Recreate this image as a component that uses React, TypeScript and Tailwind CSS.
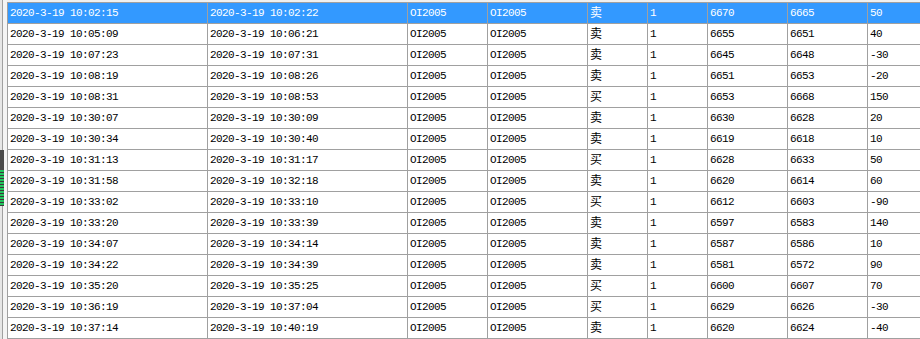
import React from 'react';

type Trade = [string, string, string, number, number, number];

const trades: Trade[] = [
  ['10:02:15', '10:02:22', '卖', 6670, 6665, 50],
  ['10:05:09', '10:06:21', '卖', 6655, 6651, 40],
  ['10:07:23', '10:07:31', '卖', 6645, 6648, -30],
  ['10:08:19', '10:08:26', '卖', 6651, 6653, -20],
  ['10:08:31', '10:08:53', '买', 6653, 6668, 150],
  ['10:30:07', '10:30:09', '卖', 6630, 6628, 20],
  ['10:30:34', '10:30:40', '卖', 6619, 6618, 10],
  ['10:31:13', '10:31:17', '买', 6628, 6633, 50],
  ['10:31:58', '10:32:18', '卖', 6620, 6614, 60],
  ['10:33:02', '10:33:10', '买', 6612, 6603, -90],
  ['10:33:20', '10:33:39', '卖', 6597, 6583, 140],
  ['10:34:07', '10:34:14', '卖', 6587, 6586, 10],
  ['10:34:22', '10:34:39', '卖', 6581, 6572, 90],
  ['10:35:20', '10:35:25', '买', 6600, 6607, 70],
  ['10:36:19', '10:37:04', '买', 6629, 6626, -30],
  ['10:37:14', '10:40:19', '卖', 6620, 6624, -40],
];

// column widths include the 1px right border
const widths = ['w-[200px]', 'w-[200px]', 'w-[80px]', 'w-[100px]', 'w-[60px]', 'w-[60px]', 'w-[80px]', 'w-[80px]', 'w-[80px]'];

const Cell = ({ w, children }: { w: string; children: React.ReactNode }) => (
  <div className={`${w} shrink-0 h-full border-r border-[#a0a0a0] pl-[2px] flex items-center whitespace-nowrap overflow-hidden`}>
    {children}
  </div>
);

export default function App() {
  return (
    <div
      className="w-[920px] h-[339px] overflow-hidden bg-[#f0f0f0] flex text-[11px] tracking-[-0.6px] leading-none"
      style={{ fontFamily: '"Liberation Mono", "Noto Sans CJK SC", monospace' }}
    >
      {/* left edge strip */}
      <div className="relative w-[7px] shrink-0 flex">
        <div className="w-[2px] bg-[#e6e6e6]" />
        <div className="w-[1px] bg-[#a0a0a0]" />
        <div className="flex-1 bg-[#f4f4f4]" />
        <div className="absolute left-0 top-[150px] w-[4px] h-[56px] flex flex-col bg-[#4a4a4a]">
          <div className="h-[20px]" />
          <div className="flex-1 bg-[repeating-linear-gradient(to_bottom,#22c55e_0px,#22c55e_2px,#3a3a3a_2px,#3a3a3a_3px)]" />
        </div>
      </div>

      {/* grid */}
      <div className="mt-[2px] flex-1 border-l border-t border-[#a0a0a0] bg-white">
        {trades.map((t, i) => {
          const selected = i === 0;
          const cells = [
            `2020-3-19 ${t[0]}`,
            `2020-3-19 ${t[1]}`,
            'OI2005',
            'OI2005',
            t[2],
            '1',
            String(t[3]),
            String(t[4]),
            String(t[5]),
          ];
          return (
            <div
              key={i}
              className={`flex h-[21px] border-b border-[#a0a0a0] ${
                selected ? 'bg-[#3399ff] text-white' : 'text-black'
              }`}
            >
              {cells.map((c, j) => (
                <Cell key={j} w={widths[j]}>
                  {j === 4 ? <span className="text-[12px] tracking-normal pt-[2px]">{c}</span> : c}
                </Cell>
              ))}
            </div>
          );
        })}
      </div>
    </div>
  );
}
